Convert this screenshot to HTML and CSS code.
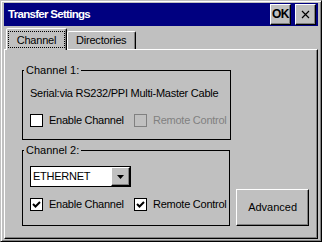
FILE: index.html
```html
<!DOCTYPE html>
<html>
<head>
<meta charset="utf-8">
<link rel="stylesheet" href="styles.css">
</head>
<body>
<div class="window">
  <div class="titlebar">
    <span class="title">Transfer Settings</span>
    <div class="tbtns">
      <div class="tbtn ok">OK</div>
      <div class="tbtn close">
        <svg width="9" height="9" viewBox="0 0 9 9"><path d="M1 1L8 8M8 1L1 8" stroke="#000" stroke-width="1.2" fill="none"/></svg>
      </div>
    </div>
  </div>
  <div class="tabs">
    <div class="tab active"><span class="focus">Channel</span></div>
    <div class="tab">Directories</div>
  </div>
  <div class="panel">
    <fieldset class="group g1">
      <legend>Channel 1:</legend>
      <div class="inner">
        <div class="serial">Serial:via RS232/PPI Multi-Master Cable</div>
        <div class="checks">
          <div class="cb"><span class="box"></span>Enable Channel</div>
          <div class="cb disabled"><span class="box"></span>Remote Control</div>
        </div>
      </div>
    </fieldset>
    <div class="row2">
      <fieldset class="group g2">
        <legend>Channel 2:</legend>
        <div class="inner">
          <div class="combo">
            <span class="combo-text">ETHERNET</span>
            <span class="combo-btn"><svg width="7" height="4" viewBox="0 0 7 4"><path d="M0 0H7L3.5 4Z" fill="#000"/></svg></span>
          </div>
          <div class="checks c2">
            <div class="cb"><span class="box"><svg width="11" height="11" viewBox="0 0 11 11"><path d="M2 5L4.5 7.5L9 3" stroke="#000" stroke-width="2" fill="none"/></svg></span>Enable Channel</div>
            <div class="cb"><span class="box"><svg width="11" height="11" viewBox="0 0 11 11"><path d="M2 5L4.5 7.5L9 3" stroke="#000" stroke-width="2" fill="none"/></svg></span>Remote Control</div>
          </div>
        </div>
      </fieldset>
      <div class="btn adv">Advanced</div>
    </div>
  </div>
</div>
</body>
</html>
```
FILE: styles.css
```css
html, body {
  margin: 0;
  padding: 0;
  background: #c0c0c0;
}
body {
  font-family: "Liberation Sans", Arial, sans-serif;
  font-size: 11px;
  line-height: 13px;
  color: #000;
}
.window {
  width: 322px;
  height: 242px;
  box-sizing: border-box;
  border: 1px solid;
  border-color: #c0c0c0 #000 #000 #c0c0c0;
  box-shadow: inset 1px 1px #fff, inset -1px -1px #808080;
  padding: 2px 3px 2px 2px;
  display: flex;
  flex-direction: column;
  background: #c0c0c0;
}
.titlebar {
  height: 23px;
  background: #000080;
  display: flex;
  align-items: center;
  justify-content: space-between;
  padding: 0 2px 0 4px;
  margin-left: 1px;
}
.title {
  color: #fff;
  font-weight: bold;
  font-size: 11.5px;
  letter-spacing: -0.7px;
}
.tbtns {
  display: flex;
  gap: 4px;
}
.tbtn {
  width: 21px;
  height: 21px;
  box-sizing: border-box;
  background: #c0c0c0;
  border: 1px solid;
  border-color: #fff #000 #000 #fff;
  box-shadow: inset -1px -1px #808080;
  display: flex;
  align-items: center;
  justify-content: center;
  font-weight: bold;
  font-size: 12px;
  letter-spacing: -0.5px;
}
.tabs {
  height: 23px;
  display: flex;
  align-items: flex-end;
  padding-left: 3px;
}
.tab {
  height: 18px;
  box-sizing: border-box;
  border: 1px solid;
  border-bottom: none;
  border-color: #fff #000 transparent #fff;
  box-shadow: inset -1px 0 #808080;
  border-radius: 2px 2px 0 0;
  padding: 2px 9px 0 8px;
  letter-spacing: -0.2px;
}
.tab.active {
  height: 22px;
  width: 61px;
  margin-bottom: -1px;
  position: relative;
  z-index: 1;
  background: #c0c0c0;
  padding: 2px 1px 0 1px;
}
.focus {
  display: flex;
  justify-content: center;
  align-items: center;
  height: 17px;
  border: 1px dotted #000;
  box-sizing: border-box;
  padding-top: 1px;
}
.panel {
  flex: 1;
  border: 1px solid;
  border-color: #fff #000 #000 #fff;
  box-shadow: inset -1px -1px #808080;
  padding: 14px 8px 0 17px;
  margin-left: 1px;
}
.group {
  margin: 0;
  width: 209px;
  box-sizing: border-box;
  border: 1px solid #000;
  padding: 10px 0 12px 1px;
  min-width: 0;
}
legend {
  padding: 0 2px;
  line-height: 13px;
}
.inner {
  padding-left: 6px;
  letter-spacing: -0.25px;
}
.checks {
  display: grid;
  grid-template-columns: 104px auto;
  margin-top: 14px;
}
.cb {
  display: flex;
  align-items: center;
  gap: 6px;
  height: 13px;
}
.box {
  width: 13px;
  height: 13px;
  box-sizing: border-box;
  border: 1px solid #000;
  background: #fff;
  display: flex;
  align-items: center;
  justify-content: center;
}
.cb.disabled {
  color: #808080;
}
.cb.disabled .box {
  border-color: #808080;
  background: #c0c0c0;
}
.row2 {
  display: flex;
  align-items: flex-end;
  margin-top: 4px;
}
.g2 {
  padding: 9px 0 14px 1px;
}
.combo {
  width: 101px;
  height: 21px;
  box-sizing: border-box;
  border: 1px solid #000;
  background: #fff;
  display: flex;
  align-items: center;
  justify-content: space-between;
  padding-left: 2px;
}
.combo-btn {
  width: 19px;
  height: 19px;
  box-sizing: border-box;
  background: #c0c0c0;
  border: 1px solid;
  border-color: #fff #000 #000 #fff;
  box-shadow: inset -1px -1px #808080;
  display: flex;
  align-items: center;
  justify-content: center;
}
.c2 {
  margin-top: 11px;
}
.btn {
  background: #c0c0c0;
  border: 1px solid;
  border-color: #fff #000 #000 #fff;
  box-shadow: inset -1px -1px #808080;
  box-sizing: border-box;
  display: flex;
  align-items: center;
  justify-content: center;
}
.adv {
  width: 73px;
  height: 37px;
  margin-left: 6px;
  margin-bottom: 0;
}
```
